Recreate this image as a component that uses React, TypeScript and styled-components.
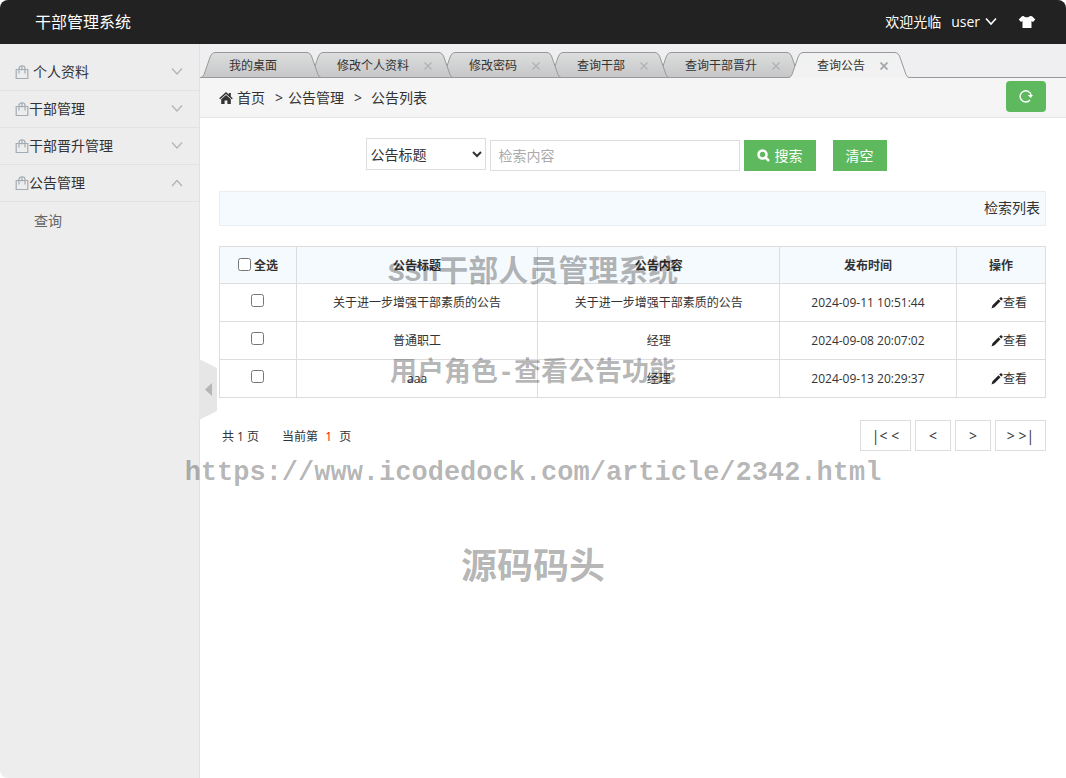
import React from 'react';
import styled, { createGlobalStyle } from 'styled-components';

const GlobalStyle = createGlobalStyle`
  * { box-sizing: border-box; }
  html { background: #fff; }
  body {
    margin: 0;
    color: #333;
    font: 14px/20px "Open Sans", "Noto Sans CJK SC", sans-serif;
  }
  a { color: inherit; text-decoration: none; }
  button, input, select { font: inherit; color: inherit; margin: 0; }
`;

const Shell = styled.div`
  position: relative;
  display: flex;
  flex-direction: column;
  min-height: 100vh;
  border-radius: 8px;
  overflow: hidden;
`;

const Header = styled.header`
  display: flex;
  align-items: center;
  justify-content: space-between;
  height: 44px;
  padding: 0 30px 0 35px;
  background: #222;
  color: #fff;
`;

const Brand = styled.h1`
  margin: 0;
  font-size: 16px;
  line-height: 24px;
  font-weight: 400;
`;

const UserBar = styled.div`
  display: flex;
  align-items: center;
  gap: 10px;
`;

const PlainButton = styled.button`
  display: flex;
  align-items: center;
  gap: 5px;
  padding: 0;
  border: 0;
  background: none;
  cursor: pointer;
`;

const SkinButton = styled(PlainButton)`
  margin-left: 11px;
`;

const Body = styled.div`
  display: flex;
  flex: 1;
`;

const Sidebar = styled.nav`
  position: relative;
  flex: 0 0 200px;
  padding-top: 10px;
  background: #ededed;
  border-right: 1px solid #e2e2e2;
`;

const MenuHeading = styled.button<{ $spaced?: boolean }>`
  display: flex;
  align-items: center;
  gap: ${(p) => (p.$spaced ? 4 : 0)}px;
  width: 100%;
  height: 37px;
  padding: 0 16px 0 15px;
  border: 0;
  border-bottom: 1px solid #e2e2e2;
  background: none;
  cursor: pointer;

  svg:last-child { margin-left: auto; }
`;

const SubLink = styled.a`
  display: block;
  padding: 9px 34px;
  color: #666;
`;

const CollapseHandle = styled.button`
  position: absolute;
  left: 100%;
  top: 314px;
  width: 18px;
  height: 62px;
  padding: 0;
  border: 0;
  background: none;
  cursor: pointer;

  svg { display: block; }
`;

const Main = styled.main`
  flex: 1;
  min-width: 0;
`;

const TabStrip = styled.div`
  display: flex;
  align-items: flex-end;
  height: 34px;
  padding-left: 1px;
  background: #efeef0;
  border-bottom: 1px solid #999;
`;

const TabItem = styled.div<{ $level: number; $width: number }>`
  position: relative;
  z-index: ${(p) => p.$level};
  display: flex;
  flex: 0 0 auto;
  align-items: center;
  width: ${(p) => p.$width}px;
  height: 26px;
  margin: 0 -12px -1px 0;
  padding-top: 2px;

  > svg { position: absolute; inset: 0; }
`;

const TabLabel = styled.a`
  position: relative;
  flex: 1;
  padding-left: 28px;
  font-size: 12px;
  white-space: nowrap;
`;

const TabClose = styled.button<{ $active?: boolean }>`
  position: relative;
  padding: 0;
  margin-right: 21px;
  border: 0;
  background: none;
  color: ${(p) => (p.$active ? '#a4a8ab' : '#acb1b5')};
  line-height: 0;
  cursor: pointer;
`;

const Crumbs = styled.div`
  display: flex;
  align-items: center;
  height: 40px;
  padding: 0 20px 0 19px;
  background: #f5f5f5;
  border-bottom: 1px solid #e5e5e5;
`;

const HomeLink = styled.a`
  display: flex;
  align-items: center;
  gap: 4px;
`;

const Separator = styled.span<{ $tight?: boolean }>`
  margin: 0 ${(p) => (p.$tight ? 5 : 9)}px 0 10px;
`;

const RefreshButton = styled.button`
  display: flex;
  align-items: center;
  justify-content: center;
  width: 40px;
  height: 31px;
  margin: 0 0 3px auto;
  padding: 0;
  border: 0;
  border-radius: 4px;
  background: #5eb95e;
  cursor: pointer;
`;

const Content = styled.div`
  padding: 20px 20px 20px 19px;
`;

const SearchForm = styled.form`
  display: flex;
  justify-content: center;
  align-items: flex-start;
  gap: 4px;
  padding-right: 13px;
`;

const FieldSelect = styled.select`
  width: 120px;
  height: 32px;
  border: 1px solid #ddd;
  border-radius: 0;
  background: #fff;
`;

const FieldInput = styled.input`
  width: 250px;
  height: 31px;
  margin-top: 2px;
  padding: 0 8px;
  border: 1px solid #ddd;
  &::placeholder { color: #aaa; opacity: 1; }
`;

const GreenButton = styled.button`
  display: flex;
  align-items: center;
  gap: 5px;
  height: 31px;
  margin-top: 2px;
  padding: 0 13px;
  border: 0;
  background: #5eb95e;
  color: #fff;
  cursor: pointer;

  & + & { margin-left: 13px; }
`;

const ListBar = styled.div`
  margin-top: 20px;
  padding: 6px 5px 7px;
  border: 1px solid #eaeef0;
  background: #f5fafe;
  text-align: right;
`;

const Grid = styled.table`
  width: 100%;
  margin-top: 20px;
  border-collapse: collapse;
  table-layout: fixed;
  font-size: 12px;

  th, td {
    height: 38px;
    padding: 0;
    border: 1px solid #ddd;
    text-align: center;
  }
  th {
    height: 37px;
    padding-top: 2px;
    background: #f5fafe;
    font-weight: 700;
  }
`;

const CheckLabel = styled.label`
  display: flex;
  align-items: center;
  justify-content: center;
  gap: 3px;
`;

const Tick = styled.input`
  width: 13px;
  height: 13px;
  margin-bottom: 3px;
`;

const ViewLink = styled.a`
  display: flex;
  align-items: center;
  justify-content: center;
  padding-left: 16px;
`;

const Footer = styled.div`
  display: flex;
  justify-content: space-between;
  align-items: center;
  margin-top: 22px;
  padding-left: 3px;
`;

const Summary = styled.div`
  display: flex;
  gap: 23px;
  padding-top: 2px;
  font-size: 12px;
  em { margin: 0 4px; color: #f00; font-style: normal; }
`;

const Pager = styled.div`
  display: flex;
  gap: 4px;
  font-size: 14px;
`;

const PageButton = styled.button<{ $wide?: boolean }>`
  width: ${(p) => (p.$wide ? 51 : 36)}px;
  height: 31px;
  padding: 0;
  border: 1px solid #ddd;
  background: #fff;
  cursor: pointer;
`;

const Watermark = styled.div`
  position: absolute;
  inset: 253px 0 auto;
  display: flex;
  flex-direction: column;
  align-items: center;
  color: rgba(0, 0, 0, 0.3);
  font-family: "Liberation Mono", "Noto Sans CJK SC", monospace;
  font-weight: 700;
  pointer-events: none;
`;

const MarkLine = styled.div<{ $size: number; $gap?: number }>`
  margin-top: ${(p) => p.$gap || 0}px;
  font-size: ${(p) => p.$size}px;
  line-height: 40px;
  white-space: nowrap;
  span { font-size: 28px; }
`;

const LockIcon = () => (
  <svg width="14" height="16" viewBox="0 0 14 16" fill="none" stroke="#a3abb3" strokeWidth="1.200">
    <path d="M1.200 5.500h11.600v9H1.200zM4 9.500V4.500C4 .8 10 .8 10 4.500v5M7 1.500v5" />
  </svg>
);

const Chevron = ({ up = false, color = '#b4b4b4', weight = 1.3 }: { up?: boolean; color?: string; weight?: number }) => (
  <svg width="12" height="10" viewBox="0 0 12 10" fill="none" stroke={color} strokeWidth={weight}>
    <path d={up ? 'M1 8l5-5.500L11 8' : 'M1 1.500L6 7l5-5.500'} />
  </svg>
);

const ShirtIcon = () => (
  <svg width="18" height="14" viewBox="0 0 18 14" fill="#fff">
    <path d="M5.500 1C7 2.800 10.500 2.800 12 1l2 .3 3.300 3.200-2.300 2.500-1.500-1V13h-9V6L3 7 .7 4.500 4 1.300z" />
  </svg>
);

const HomeIcon = () => (
  <svg width="14" height="12" viewBox="0 0 14 12" fill="#333">
    <path d="M7 0l2.800 2.500V1h2v3.400l2 1.900-1 1L7 2 1.200 7.300l-1-1z" />
    <path d="M7 3l4.800 4.300V12H8.400V8.400H5.600V12H2.200V7.300z" />
  </svg>
);

const RefreshIcon = () => (
  <svg width="14" height="14" viewBox="0 0 14 14" fill="none" stroke="#fff" strokeWidth="1.400">
    <path d="M11 11A5.600 5.600 0 1 1 12.200 6" />
    <path d="M8.800 6H14l-2.200 3z" fill="#fff" stroke="none" />
  </svg>
);

const SearchIcon = () => (
  <svg width="13" height="13" viewBox="0 0 13 13" fill="none" stroke="#fff" strokeWidth="2.500">
    <circle cx="5.500" cy="5.500" r="4" />
    <path d="M8.500 8.500l3.500 3.500" />
  </svg>
);

const PencilIcon = () => (
  <svg width="12" height="12" viewBox="0 0 12 12" fill="#222">
    <path d="M.5 11.500l1-3.200 6-6 2 2-6 6zM8.200 1.600L9.400.4c.4-.4.8-.3 1.200 0l.8.8c.3.400.4.800 0 1.200l-1.200 1.200z" />
  </svg>
);

const CloseIcon = ({ bold }: { bold?: boolean }) => (
  <svg width="8" height="8" viewBox="0 0 8 8" stroke="currentColor" strokeWidth={bold ? 1.8 : 1.1}>
    <path d="M.5.5l7 7M7.500.5l-7 7" />
  </svg>
);

const TabShape = ({ width: w, active }: { width: number; active?: boolean }) => {
  const edge = `M0 25.500Q2 25 3 22.500L9.500 4Q11 .5 14 .5H${w - 14}Q${w - 11} .5 ${w - 9.500} 4L${w - 3} 22.500Q${w - 2} 25 ${w} 25.500`;
  const id = active ? 'tab-on' : 'tab-off';
  return (
    <svg width={w} height="26" viewBox={`0 0 ${w} 26`}>
      <defs>
        <linearGradient id={id} x1="0" y1="0" x2="0" y2="1">
          <stop offset="0" stopColor={active ? '#f0f1f1' : '#dcdedd'} />
          <stop offset="1" stopColor={active ? '#f3f2f3' : '#c6c6c8'} />
        </linearGradient>
      </defs>
      <path d={`${edge}V26H0z`} fill={`url(#${id})`} />
      <path d={active ? edge : `${edge}H0`} fill="none" stroke="#999" />
    </svg>
  );
};

const menu = [
  { name: '个人资料', spaced: true },
  { name: '干部管理' },
  { name: '干部晋升管理' },
  { name: '公告管理', open: true },
];

const tabs = [
  { name: '我的桌面', width: 120, fixed: true },
  { name: '修改个人资料', width: 144 },
  { name: '修改密码', width: 120 },
  { name: '查询干部', width: 120 },
  { name: '查询干部晋升', width: 144 },
  { name: '查询公告', width: 120, active: true },
];

const notices = [
  { title: '关于进一步增强干部素质的公告', body: '关于进一步增强干部素质的公告', time: '2024-09-11 10:51:44' },
  { title: '普通职工', body: '经理', time: '2024-09-08 20:07:02' },
  { title: 'aaa', body: '经理', time: '2024-09-13 20:29:37' },
];

export default function App() {
  return (
    <>
      <GlobalStyle />
      <Shell>
        <Header>
          <Brand>干部管理系统</Brand>
          <UserBar>
            <span>欢迎光临</span>
            <PlainButton type="button">
              user
              <Chevron color="#fff" weight={1.6} />
            </PlainButton>
            <SkinButton type="button" aria-label="换肤"><ShirtIcon /></SkinButton>
          </UserBar>
        </Header>
        <Body>
          <Sidebar>
            {menu.map((m) => (
              <MenuHeading key={m.name} type="button" $spaced={m.spaced} aria-expanded={!!m.open}>
                <LockIcon />
                {m.name}
                <Chevron up={m.open} />
              </MenuHeading>
            ))}
            <SubLink href="#query">查询</SubLink>
            <CollapseHandle type="button" aria-label="收起菜单">
              <svg width="18" height="62" viewBox="0 0 18 62">
                <path d="M0 1l18 9v43L0 62z" fill="#e6e6e6" />
                <path d="M13 25v13l-7-6.500z" fill="#b5b5b5" />
              </svg>
            </CollapseHandle>
          </Sidebar>
          <Main>
            <TabStrip>
              {tabs.map((t, i) => (
                <TabItem key={t.name} $width={t.width} $level={t.active ? tabs.length + 1 : tabs.length - i}>
                  <TabShape width={t.width} active={t.active} />
                  <TabLabel href="#tab">{t.name}</TabLabel>
                  {!t.fixed && (
                    <TabClose type="button" aria-label="关闭" $active={t.active}>
                      <CloseIcon bold={t.active} />
                    </TabClose>
                  )}
                </TabItem>
              ))}
            </TabStrip>
            <Crumbs>
              <HomeLink href="#home"><HomeIcon />首页</HomeLink>
              <Separator $tight>&gt;</Separator>
              <span>公告管理</span>
              <Separator>&gt;</Separator>
              <span>公告列表</span>
              <RefreshButton type="button" aria-label="刷新"><RefreshIcon /></RefreshButton>
            </Crumbs>
            <Content>
              <SearchForm>
                <FieldSelect aria-label="检索字段">
                  <option>公告标题</option>
                </FieldSelect>
                <FieldInput type="text" placeholder="检索内容" aria-label="检索内容" />
                <GreenButton type="button"><SearchIcon />搜索</GreenButton>
                <GreenButton type="reset">清空</GreenButton>
              </SearchForm>
              <ListBar>检索列表</ListBar>
              <Grid>
                <colgroup>
                  <col style={{ width: '9.3%' }} />
                  <col />
                  <col />
                  <col style={{ width: '21.4%' }} />
                  <col style={{ width: '10.8%' }} />
                </colgroup>
                <thead>
                  <tr>
                    <th><CheckLabel><Tick type="checkbox" />全选</CheckLabel></th>
                    <th>公告标题</th>
                    <th>公告内容</th>
                    <th>发布时间</th>
                    <th>操作</th>
                  </tr>
                </thead>
                <tbody>
                  {notices.map((n) => (
                    <tr key={n.time}>
                      <td><Tick type="checkbox" aria-label={n.title} /></td>
                      <td>{n.title}</td>
                      <td>{n.body}</td>
                      <td>{n.time}</td>
                      <td><ViewLink href="#view"><PencilIcon />查看</ViewLink></td>
                    </tr>
                  ))}
                </tbody>
              </Grid>
              <Footer>
                <Summary>
                  <span>共 1 页</span>
                  <span>当前第 <em>1</em> 页</span>
                </Summary>
                <Pager>
                  <PageButton type="button" $wide>|&lt; &lt;</PageButton>
                  <PageButton type="button">&lt;</PageButton>
                  <PageButton type="button">&gt;</PageButton>
                  <PageButton type="button" $wide>&gt; &gt;|</PageButton>
                </Pager>
              </Footer>
            </Content>
          </Main>
        </Body>
        <Watermark>
          <MarkLine $size={30}><span>SSh</span>干部人员管理系统</MarkLine>
          <MarkLine $size={27} $gap={60}>用户角色-查看公告功能</MarkLine>
          <MarkLine $size={27} $gap={59}>https://www.icodedock.com/article/2342.html</MarkLine>
          <MarkLine $size={36} $gap={57}>源码码头</MarkLine>
        </Watermark>
      </Shell>
    </>
  );
}
